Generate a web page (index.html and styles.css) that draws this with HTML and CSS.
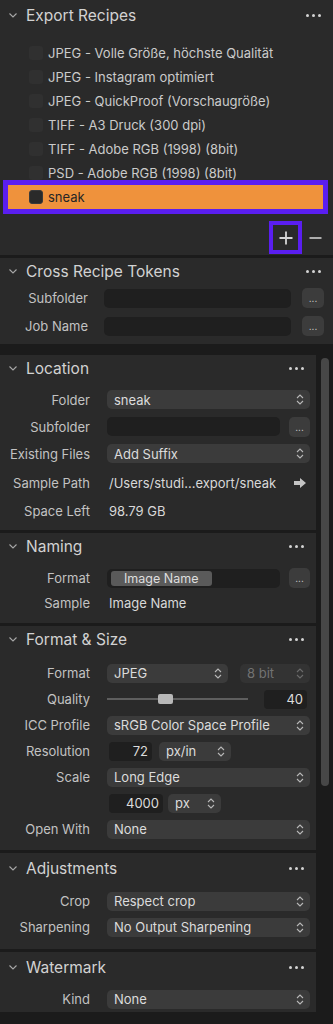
FILE: index.html
```html
<!DOCTYPE html>
<html lang="de">
<head>
    <meta charset="UTF-8">
    <title>Export Recipes</title>
    <link rel="stylesheet" href="styles.css">
</head>
<body>
    <div class="app">
        <!-- Rezeptliste -->
        <section class="panel recipes">
            <div class="panel-head">
                <svg class="chevron" width="8" height="5" viewBox="0 0 8 5"><path d="M0.5 0.5 L4 4 L7.5 0.5" fill="none" stroke="#a8a8a8" stroke-width="1.1"/></svg>
                <span class="title">Export Recipes</span>
                <span class="more"><i></i><i></i><i></i></span>
            </div>
            <div class="recipe-list">
                <div class="recipe"><span class="check"></span>JPEG - Volle Größe, höchste Qualität</div>
                <div class="recipe"><span class="check"></span>JPEG - Instagram optimiert</div>
                <div class="recipe"><span class="check"></span>JPEG - QuickProof (Vorschaugröße)</div>
                <div class="recipe"><span class="check"></span>TIFF - A3 Druck (300 dpi)</div>
                <div class="recipe"><span class="check"></span>TIFF - Adobe RGB (1998) (8bit)</div>
                <div class="recipe"><span class="check"></span>PSD - Adobe RGB (1998) (8bit)</div>
                <div class="recipe selected"><span class="check"></span>sneak</div>
            </div>
            <div class="recipe-tools">
                <button class="tool add"><svg width="14" height="14" viewBox="0 0 14 14"><path d="M7 0.5 V13.5 M0.5 7 H13.5" stroke="#d6d6d6" stroke-width="1.8"/></svg></button>
                <button class="tool remove"><svg width="13" height="14" viewBox="0 0 13 14"><path d="M0.5 7 H12.5" stroke="#bdbdbd" stroke-width="1.8"/></svg></button>
            </div>
        </section>

        <!-- Tokens -->
        <section class="panel tokens">
            <div class="panel-head">
                <svg class="chevron" width="8" height="5" viewBox="0 0 8 5"><path d="M0.5 0.5 L4 4 L7.5 0.5" fill="none" stroke="#a8a8a8" stroke-width="1.1"/></svg>
                <span class="title">Cross Recipe Tokens</span>
                <span class="more"><i></i><i></i><i></i></span>
            </div>
            <div class="panel-body">
                <div class="row tall">
                    <label>Subfolder</label>
                    <span class="field grow"></span>
                    <span class="dots-btn">...</span>
                </div>
                <div class="row tall">
                    <label>Job Name</label>
                    <span class="field grow"></span>
                    <span class="dots-btn">...</span>
                </div>
            </div>
        </section>

        <div class="scroll-area">
            <div class="panels">
                <!-- Location -->
                <section class="panel location">
                    <div class="panel-head">
                        <svg class="chevron" width="8" height="5" viewBox="0 0 8 5"><path d="M0.5 0.5 L4 4 L7.5 0.5" fill="none" stroke="#a8a8a8" stroke-width="1.1"/></svg>
                        <span class="title">Location</span>
                        <span class="more"><i></i><i></i><i></i></span>
                    </div>
                    <div class="panel-body">
                        <div class="row mid">
                            <label>Folder</label>
                            <span class="select grow">sneak<svg class="updown" width="8" height="13" viewBox="0 0 8 13"><path d="M1 5 L4 2 L7 5 M1 8 L4 11 L7 8" fill="none" stroke="#b9b9b9" stroke-width="1.1"/></svg></span>
                        </div>
                        <div class="row mid">
                            <label>Subfolder</label>
                            <span class="field grow"></span>
                            <span class="dots-btn small">...</span>
                        </div>
                        <div class="row mid">
                            <label>Existing Files</label>
                            <span class="select grow">Add Suffix<svg class="updown" width="8" height="13" viewBox="0 0 8 13"><path d="M1 5 L4 2 L7 5 M1 8 L4 11 L7 8" fill="none" stroke="#b9b9b9" stroke-width="1.1"/></svg></span>
                        </div>
                        <div class="row info first">
                            <label>Sample Path</label>
                            <span class="value grow">/Users/studi...export/sneak</span>
                            <svg class="go" width="12" height="10" viewBox="0 0 12 10"><path d="M0 3 H6 V0 L12 5 L6 10 V7 H0 Z" fill="#c4c4c4"/></svg>
                        </div>
                        <div class="row info">
                            <label>Space Left</label>
                            <span class="value">98.79 GB</span>
                        </div>
                    </div>
                </section>

                <!-- Naming -->
                <section class="panel naming">
                    <div class="panel-head">
                        <svg class="chevron" width="8" height="5" viewBox="0 0 8 5"><path d="M0.5 0.5 L4 4 L7.5 0.5" fill="none" stroke="#a8a8a8" stroke-width="1.1"/></svg>
                        <span class="title">Naming</span>
                        <span class="more"><i></i><i></i><i></i></span>
                    </div>
                    <div class="panel-body">
                        <div class="row">
                            <label>Format</label>
                            <span class="field grow token-field"><span class="token">Image Name</span></span>
                            <span class="dots-btn small">...</span>
                        </div>
                        <div class="row short">
                            <label>Sample</label>
                            <span class="value">Image Name</span>
                        </div>
                    </div>
                </section>

                <!-- Format & Size -->
                <section class="panel format">
                    <div class="panel-head">
                        <svg class="chevron" width="8" height="5" viewBox="0 0 8 5"><path d="M0.5 0.5 L4 4 L7.5 0.5" fill="none" stroke="#a8a8a8" stroke-width="1.1"/></svg>
                        <span class="title">Format &amp; Size</span>
                        <span class="more"><i></i><i></i><i></i></span>
                    </div>
                    <div class="panel-body">
                        <div class="row">
                            <label>Format</label>
                            <span class="select w-format">JPEG<svg class="updown" width="8" height="13" viewBox="0 0 8 13"><path d="M1 5 L4 2 L7 5 M1 8 L4 11 L7 8" fill="none" stroke="#b9b9b9" stroke-width="1.1"/></svg></span>
                            <span class="select disabled grow">8 bit<svg class="updown" width="8" height="13" viewBox="0 0 8 13"><path d="M1 5 L4 2 L7 5 M1 8 L4 11 L7 8" fill="none" stroke="#6c6c6c" stroke-width="1.1"/></svg></span>
                        </div>
                        <div class="row">
                            <label>Quality</label>
                            <span class="slider"><span class="knob"></span></span>
                            <span class="number w-quality">40</span>
                        </div>
                        <div class="row">
                            <label>ICC Profile</label>
                            <span class="select grow">sRGB Color Space Profile<svg class="updown" width="8" height="13" viewBox="0 0 8 13"><path d="M1 5 L4 2 L7 5 M1 8 L4 11 L7 8" fill="none" stroke="#b9b9b9" stroke-width="1.1"/></svg></span>
                        </div>
                        <div class="row">
                            <label>Resolution</label>
                            <span class="number w-res">72</span>
                            <span class="select w-unit">px/in<svg class="updown" width="8" height="13" viewBox="0 0 8 13"><path d="M1 5 L4 2 L7 5 M1 8 L4 11 L7 8" fill="none" stroke="#b9b9b9" stroke-width="1.1"/></svg></span>
                        </div>
                        <div class="row">
                            <label>Scale</label>
                            <span class="select grow">Long Edge<svg class="updown" width="8" height="13" viewBox="0 0 8 13"><path d="M1 5 L4 2 L7 5 M1 8 L4 11 L7 8" fill="none" stroke="#b9b9b9" stroke-width="1.1"/></svg></span>
                        </div>
                        <div class="row">
                            <label></label>
                            <span class="number w-size">4000</span>
                            <span class="select w-px">px<svg class="updown" width="8" height="13" viewBox="0 0 8 13"><path d="M1 5 L4 2 L7 5 M1 8 L4 11 L7 8" fill="none" stroke="#b9b9b9" stroke-width="1.1"/></svg></span>
                        </div>
                        <div class="row">
                            <label>Open With</label>
                            <span class="select grow">None<svg class="updown" width="8" height="13" viewBox="0 0 8 13"><path d="M1 5 L4 2 L7 5 M1 8 L4 11 L7 8" fill="none" stroke="#b9b9b9" stroke-width="1.1"/></svg></span>
                        </div>
                    </div>
                </section>

                <!-- Adjustments -->
                <section class="panel adjustments">
                    <div class="panel-head">
                        <svg class="chevron" width="8" height="5" viewBox="0 0 8 5"><path d="M0.5 0.5 L4 4 L7.5 0.5" fill="none" stroke="#a8a8a8" stroke-width="1.1"/></svg>
                        <span class="title">Adjustments</span>
                        <span class="more"><i></i><i></i><i></i></span>
                    </div>
                    <div class="panel-body">
                        <div class="row">
                            <label>Crop</label>
                            <span class="select grow">Respect crop<svg class="updown" width="8" height="13" viewBox="0 0 8 13"><path d="M1 5 L4 2 L7 5 M1 8 L4 11 L7 8" fill="none" stroke="#b9b9b9" stroke-width="1.1"/></svg></span>
                        </div>
                        <div class="row">
                            <label>Sharpening</label>
                            <span class="select grow">No Output Sharpening<svg class="updown" width="8" height="13" viewBox="0 0 8 13"><path d="M1 5 L4 2 L7 5 M1 8 L4 11 L7 8" fill="none" stroke="#b9b9b9" stroke-width="1.1"/></svg></span>
                        </div>
                    </div>
                </section>

                <!-- Watermark -->
                <section class="panel watermark">
                    <div class="panel-head">
                        <svg class="chevron" width="8" height="5" viewBox="0 0 8 5"><path d="M0.5 0.5 L4 4 L7.5 0.5" fill="none" stroke="#a8a8a8" stroke-width="1.1"/></svg>
                        <span class="title">Watermark</span>
                        <span class="more"><i></i><i></i><i></i></span>
                    </div>
                    <div class="panel-body">
                        <div class="row">
                            <label>Kind</label>
                            <span class="select grow">None<svg class="updown" width="8" height="13" viewBox="0 0 8 13"><path d="M1 5 L4 2 L7 5 M1 8 L4 11 L7 8" fill="none" stroke="#b9b9b9" stroke-width="1.1"/></svg></span>
                        </div>
                    </div>
                </section>
            </div>
            <div class="scrollbar"><div class="thumb"></div></div>
        </div>
    </div>
</body>
</html>
```

FILE: styles.css
```css
/* Grundlayout */
body {
    margin: 0;
    background: #1b1b1b;
    font-family: Inter, "Noto Sans", sans-serif;
    font-size: 13px;
    color: #d6d6d6;
    height: 1024px;
    overflow: hidden;
}

.app {
    width: 333px;
}

/* Panel */
.panel {
    background: #2a2a2a;
    margin-bottom: 3px;
}

.panel-head {
    display: flex;
    align-items: center;
    height: 26px;
    padding: 0 12px 0 9px;
}

.panel-head .chevron {
    margin-right: 9px;
    flex: none;
}

.panel-head .title {
    flex: 1;
    font-size: 15.5px;
    color: #d2d2d2;
}

.more {
    display: flex;
    gap: 3px;
}

.more i {
    width: 3px;
    height: 3px;
    border-radius: 50%;
    background: #d4d4d4;
}

/* Rezeptliste */
.recipes .panel-head {
    height: 30px;
}

.recipe-list {
    padding-top: 11px;
}

.recipe {
    display: flex;
    align-items: center;
    height: 24px;
    padding-left: 29px;
    color: #cbcbcb;
}

.check {
    width: 14px;
    height: 14px;
    border-radius: 3px;
    background: #303030;
    margin-right: 5px;
    flex: none;
}

.recipe.selected {
    background: #ef923c;
    color: #262626;
    outline: 5px solid #5a1ef0;
    margin: 0 10px 0 8px;
    padding-left: 21px;
}

.recipe.selected .check {
    background: #2a2a2a;
    border: 1px solid #3a3a3a;
    width: 12px;
    height: 12px;
}

.recipe-tools {
    display: flex;
    justify-content: flex-end;
    align-items: flex-start;
    height: 46px;
    padding: 16px 8px 0 0;
    box-sizing: border-box;
    gap: 7px;
}

.tool {
    background: none;
    border: none;
    padding: 0;
    width: 25px;
    height: 25px;
    display: flex;
    align-items: center;
    justify-content: center;
}

.tool.add {
    outline: 4px solid #5a1ef0;
}

.tool.remove {
    width: 20px;
}

/* Formularzeilen */
.panel-body {
    padding: 0 6px 0 0;
}

.row {
    display: flex;
    align-items: center;
    height: 26px;
    gap: 12px;
}

.row label {
    width: 90px;
    margin-right: 5px;
    text-align: right;
    color: #c2c2c2;
    flex: none;
}

.grow {
    flex: 1;
}

.select {
    display: flex;
    align-items: center;
    justify-content: space-between;
    height: 19px;
    padding: 0 6px 0 7px;
    background: #3b3b3b;
    border-radius: 5px;
    color: #dcdcdc;
    box-sizing: border-box;
}

.select.disabled {
    background: #333333;
    color: #727272;
}

.field {
    height: 19px;
    background: #1f1f1f;
    border-radius: 5px;
}

.number {
    height: 19px;
    line-height: 19px;
    background: #1f1f1f;
    border-radius: 4px;
    text-align: right;
    padding-right: 4px;
    box-sizing: border-box;
    color: #dcdcdc;
}

.dots-btn {
    width: 22px;
    height: 20px;
    background: #3c3c3c;
    border-radius: 5px;
    font-size: 10px;
    line-height: 20px;
    text-align: center;
    color: #cfcfcf;
    flex: none;
}

.dots-btn.small {
    width: 21px;
    margin-left: -3px;
}

.value {
    color: #d8d8d8;
    padding-left: 2px;
}

.go {
    margin-right: 4px;
}

/* Tokens */
.tokens {
    margin-bottom: 11px;
}

.tokens .panel-body {
    padding: 0 9px 4px 0;
}

.tokens .row {
    height: 28px;
    gap: 11px;
}

.tokens .row label {
    width: 88px;
}

/* Scrollbereich */
.scroll-area {
    display: flex;
}

.panels {
    width: 316px;
}

.scrollbar {
    flex: 1;
    padding: 3px 0 0 5px;
}

.thumb {
    width: 8px;
    height: 428px;
    border-radius: 4px;
    background: #474747;
}

/* Location */
.location .panel-body {
    padding-top: 5px;
    padding-bottom: 5px;
}

.location .row.mid {
    height: 27px;
}

.location .row.info {
    height: 28px;
}

.location .row.info.first {
    margin-top: 2px;
}

/* Naming */
.naming .panel-body {
    padding-top: 6px;
    padding-bottom: 8px;
}

.naming .row.short {
    height: 24px;
}

.token-field {
    display: flex;
    align-items: center;
    padding-left: 4px;
}

.token {
    width: 101px;
    height: 15px;
    line-height: 15px;
    background: #5a5a5a;
    border-radius: 3px;
    padding-left: 13px;
    box-sizing: border-box;
    color: #dedede;
    font-size: 12.5px;
}

/* Format & Size */
.format .panel-body {
    padding-top: 8px;
    padding-bottom: 8px;
}

.w-format {
    width: 121px;
}

.slider {
    width: 141px;
    height: 2px;
    background: #5e5e5e;
    position: relative;
}

.knob {
    position: absolute;
    left: 51px;
    top: -4px;
    width: 15px;
    height: 10px;
    border-radius: 2px;
    background: #b8b8b8;
}

.w-quality {
    width: 43px;
    margin-left: 4px;
    margin-right: 3px;
}

.w-res {
    width: 43px;
    margin-left: 2px;
}

.w-unit {
    width: 72px;
    margin-left: -5px;
}

.w-size {
    width: 54px;
    margin-left: 2px;
}

.w-px {
    width: 53px;
    margin-left: -7px;
}

/* Adjustments / Watermark */
.adjustments .panel-head,
.watermark .panel-head {
    height: 30px;
}

.adjustments .panel-body {
    padding-top: 5px;
    padding-bottom: 9px;
}

.watermark .panel-body {
    padding-top: 4px;
}
```
